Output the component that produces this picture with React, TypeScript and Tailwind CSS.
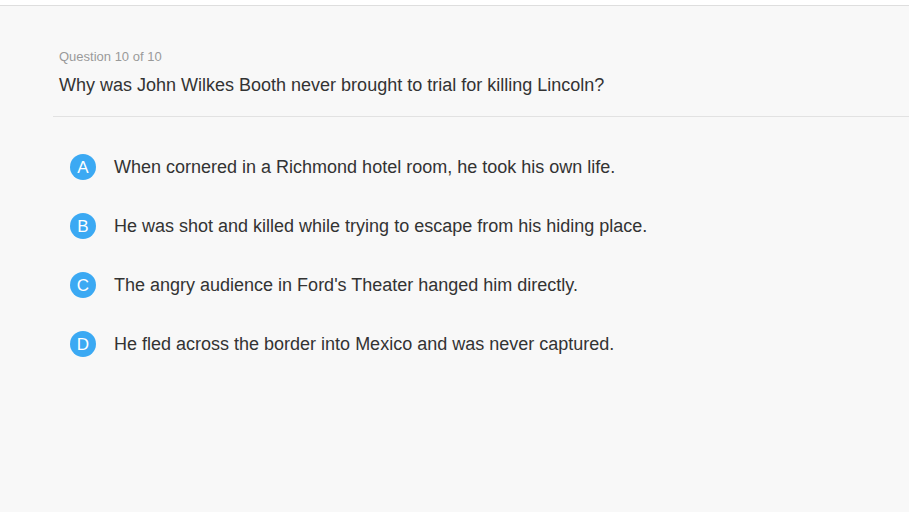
import React from "react";

const answers = [
  { key: "A", text: "When cornered in a Richmond hotel room, he took his own life." },
  { key: "B", text: "He was shot and killed while trying to escape from his hiding place." },
  { key: "C", text: "The angry audience in Ford's Theater hanged him directly." },
  { key: "D", text: "He fled across the border into Mexico and was never captured." },
];

export default function App() {
  return (
    <div
      className="w-[909px] h-[512px] overflow-hidden bg-white"
      style={{ fontFamily: '"Liberation Sans", Arial, sans-serif' }}
    >
      <div className="h-[5px] bg-white border-b border-[#dedede] box-content" />
      <div className="h-[506px] bg-[#f8f8f8] pt-[43px]">
        <div className="ml-[53px] border-b border-[#e2e2e2] pb-[20px]">
          <div className="pl-[6px] text-[13px] leading-[16px] text-[#9a9a9a]">Question 10 of 10</div>
          <div className="pl-[6px] mt-[10px] text-[18px] leading-[21px] text-[#333333]">
            Why was John Wilkes Booth never brought to trial for killing Lincoln?
          </div>
        </div>
        <div className="ml-[70px] mt-[37px] flex flex-col gap-[33px]">
          {answers.map((a) => (
            <div key={a.key} className="flex items-center gap-[18px]">
              <div className="w-[26px] h-[26px] rounded-full bg-[#3ba9f3] text-white text-[17px] flex items-center justify-center leading-none">
                {a.key}
              </div>
              <div className="text-[18px] leading-[21px] text-[#333333]">{a.text}</div>
            </div>
          ))}
        </div>
      </div>
    </div>
  );
}
